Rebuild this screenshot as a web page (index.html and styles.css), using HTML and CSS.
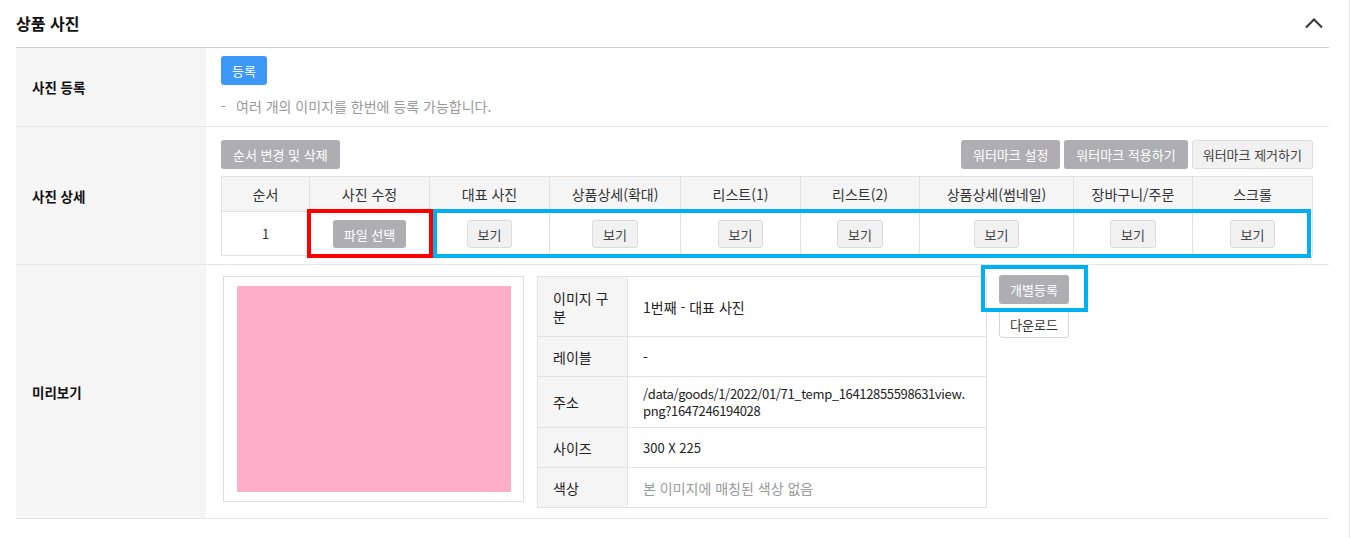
FILE: index.html
```html
<!DOCTYPE html>
<html lang="ko">
<head>
    <meta charset="UTF-8">
    <meta name="viewport" content="width=device-width, initial-scale=1.0">
    <title>상품 사진</title>
    <link rel="stylesheet" href="styles.css">
</head>
<body>
    <div class="layout">
        <div class="content">
            <div class="section-header">
                <h2>상품 사진</h2>
                <button class="toggle" type="button" aria-label="접기">
                    <svg width="18" height="12" viewBox="0 0 18 12">
                        <polyline points="1,10.5 9,2.5 17,10.5" fill="none" stroke="#333" stroke-width="2"/>
                    </svg>
                </button>
            </div>

            <div class="form-row">
                <div class="form-label">사진 등록</div>
                <div class="form-field field-register">
                    <div><button class="btn btn-blue" type="button">등록</button></div>
                    <p class="note"><span class="dash">-</span>여러 개의 이미지를 한번에 등록 가능합니다.</p>
                </div>
            </div>

            <div class="form-row">
                <div class="form-label">사진 상세</div>
                <div class="form-field field-detail">
                    <div class="toolbar">
                        <button class="btn btn-gray" type="button">순서 변경 및 삭제</button>
                        <div class="toolbar-right">
                            <button class="btn btn-gray" type="button">워터마크 설정</button>
                            <button class="btn btn-gray" type="button">워터마크 적용하기</button>
                            <button class="btn btn-light" type="button">워터마크 제거하기</button>
                        </div>
                    </div>
                    <div class="grid-wrap">
                        <table class="photo-grid">
                            <colgroup>
                                <col class="c-order">
                                <col class="c-120">
                                <col class="c-120">
                                <col class="c-131">
                                <col class="c-120">
                                <col class="c-119">
                                <col class="c-154">
                                <col class="c-119">
                                <col class="c-120">
                            </colgroup>
                            <thead>
                                <tr>
                                    <th>순서</th>
                                    <th>사진 수정</th>
                                    <th>대표 사진</th>
                                    <th>상품상세(확대)</th>
                                    <th>리스트(1)</th>
                                    <th>리스트(2)</th>
                                    <th>상품상세(썸네일)</th>
                                    <th>장바구니/주문</th>
                                    <th>스크롤</th>
                                </tr>
                            </thead>
                            <tbody>
                                <tr>
                                    <td class="num">1</td>
                                    <td><button class="btn btn-gray btn-sm" type="button">파일 선택</button></td>
                                    <td><button class="btn btn-light btn-sm" type="button">보기</button></td>
                                    <td><button class="btn btn-light btn-sm" type="button">보기</button></td>
                                    <td><button class="btn btn-light btn-sm" type="button">보기</button></td>
                                    <td><button class="btn btn-light btn-sm" type="button">보기</button></td>
                                    <td><button class="btn btn-light btn-sm" type="button">보기</button></td>
                                    <td><button class="btn btn-light btn-sm" type="button">보기</button></td>
                                    <td><button class="btn btn-light btn-sm" type="button">보기</button></td>
                                </tr>
                            </tbody>
                        </table>
                        <span class="mark mark-red mark-file"></span>
                        <span class="mark mark-blue mark-views"></span>
                    </div>
                </div>
            </div>

            <div class="form-row">
                <div class="form-label">미리보기</div>
                <div class="form-field field-preview">
                    <div class="preview-box">
                        <div class="preview-image"></div>
                    </div>
                    <table class="info-table">
                        <tr class="row-type">
                            <th>이미지 구분</th>
                            <td>1번째 - 대표 사진</td>
                        </tr>
                        <tr class="row-std">
                            <th>레이블</th>
                            <td>-</td>
                        </tr>
                        <tr class="row-path">
                            <th>주소</th>
                            <td class="path">/data/goods/1/2022/01/71_temp_16412855598631view.<wbr>png?1647246194028</td>
                        </tr>
                        <tr class="row-std">
                            <th>사이즈</th>
                            <td class="latin">300 X 225</td>
                        </tr>
                        <tr class="row-std">
                            <th>색상</th>
                            <td class="muted">본 이미지에 매칭된 색상 없음</td>
                        </tr>
                    </table>
                    <div class="preview-actions">
                        <button class="btn btn-gray" type="button">개별등록</button>
                        <button class="btn btn-white" type="button">다운로드</button>
                        <span class="mark mark-blue mark-single"></span>
                    </div>
                </div>
            </div>
        </div>
        <div class="scroll-track"></div>
    </div>
</body>
</html>
```

FILE: styles.css
```css
* {
    margin: 0;
    padding: 0;
    box-sizing: border-box;
}

body {
    font-family: "Noto Sans CJK KR", "Noto Sans", sans-serif;
    font-size: 14px;
    line-height: 18px;
    color: #222;
    background: #fff;
}

.layout {
    display: flex;
    min-height: 538px;
}

.content {
    flex: 1;
    padding: 0 20px 0 16px;
}

.scroll-track {
    width: 2px;
    background: #dfe1e5;
}

/* section title */
.section-header {
    height: 48px;
    display: flex;
    align-items: center;
    justify-content: space-between;
    padding: 0 6px 2px 0;
    border-bottom: 1px solid #cfcfcf;
}

.section-header h2 {
    font-size: 16px;
    font-weight: 700;
    color: #111;
}

.toggle {
    background: none;
    border: none;
    width: 18px;
    height: 12px;
    display: flex;
}

/* form rows */
.form-row {
    display: flex;
    border-bottom: 1px solid #e6e6e6;
}

.form-label {
    width: 190px;
    flex-shrink: 0;
    background: #f5f5f5;
    padding-left: 16px;
    display: flex;
    align-items: center;
    font-size: 13.5px;
    font-weight: 700;
    color: #111;
}

.form-field {
    flex: 1;
    padding: 0 16px 0 15px;
}

.field-register {
    padding-top: 8px;
    padding-bottom: 11px;
}

.note {
    margin-top: 12px;
    color: #999;
}

.note .dash {
    display: inline-block;
    width: 15px;
}

.field-detail {
    padding-top: 13px;
    padding-bottom: 8px;
}

.toolbar {
    display: flex;
    justify-content: space-between;
    margin-bottom: 7px;
}

.toolbar-right {
    display: flex;
    gap: 4px;
}

/* buttons */
.btn {
    font-family: inherit;
    font-size: 13px;
    height: 29px;
    padding: 0 10px;
    border-radius: 3px;
    border: 1px solid transparent;
    cursor: pointer;
    white-space: nowrap;
}

.btn-blue {
    background: #3c98f6;
    color: #fff;
}

.btn-gray {
    background: #aeaeb2;
    color: #fff;
    padding: 0 11px;
}

.btn-light {
    background: #f1f1f1;
    border-color: #dcdcdc;
    color: #444;
}

.btn-white {
    background: #fff;
    border-color: #d5d5d5;
    color: #333;
}

.btn-sm {
    height: 28px;
    padding: 0 10px;
}

/* image grid */
.grid-wrap {
    position: relative;
}

.photo-grid {
    width: 100%;
    table-layout: fixed;
    border-collapse: collapse;
    text-align: center;
}

.photo-grid .c-order { width: 88px; }
.photo-grid .c-119 { width: 119px; }
.photo-grid .c-120 { width: 120px; }
.photo-grid .c-131 { width: 131px; }
.photo-grid .c-154 { width: 154px; }

.photo-grid th,
.photo-grid td {
    border: 1px solid #e2e2e2;
    font-weight: 400;
    color: #333;
}

.photo-grid th {
    height: 35px;
    background: #f5f5f5;
}

.photo-grid td {
    height: 44px;
    padding-top: 1px;
}

.photo-grid .num {
    font-size: 13px;
}

/* highlight frames */
.mark {
    position: absolute;
    border: 4px solid;
    pointer-events: none;
}

.mark-red {
    border-color: #ff0000;
}

.mark-blue {
    border-color: #00b0f0;
}

.mark-file {
    left: 86px;
    top: 33px;
    width: 126px;
    height: 49px;
}

.mark-views {
    left: 212px;
    top: 33px;
    width: 878px;
    height: 49px;
}

/* preview */
.field-preview {
    display: flex;
    align-items: flex-start;
    padding-top: 11px;
    padding-bottom: 10px;
}

.preview-box {
    margin-left: 2px;
    border: 1px solid #dedede;
    padding: 9px 12px 9px 13px;
}

.preview-image {
    width: 274px;
    height: 206px;
    background: #fdaec9;
}

.info-table {
    margin-left: 13px;
    width: 450px;
    border-collapse: collapse;
    border: 1px solid #dedede;
}

.info-table th,
.info-table td {
    border: 1px solid #e2e2e2;
    padding: 0 15px;
    text-align: left;
    vertical-align: middle;
}

.info-table th {
    width: 90px;
    background: #f5f5f5;
    font-weight: 400;
    color: #222;
    padding-right: 14px;
}

.info-table td {
    color: #222;
}

.info-table .row-type th,
.info-table .row-type td {
    height: 60px;
}

.info-table .row-std th,
.info-table .row-std td {
    height: 40px;
}

.info-table .row-path th,
.info-table .row-path td {
    height: 51px;
}

.info-table .path {
    font-size: 13px;
    line-height: 17px;
    letter-spacing: -0.35px;
    overflow-wrap: anywhere;
    padding-right: 8px;
}

.info-table .latin {
    font-size: 13px;
}

.info-table .muted {
    color: #999;
}

.preview-actions {
    position: relative;
    margin-left: 12px;
    margin-top: -1px;
    display: flex;
    flex-direction: column;
    gap: 6px;
}

.preview-actions .btn {
    width: 70px;
    padding: 0;
}

.preview-actions .btn-white {
    height: 28px;
}

.mark-single {
    left: -18px;
    top: -10px;
    width: 107px;
    height: 47px;
}
```
